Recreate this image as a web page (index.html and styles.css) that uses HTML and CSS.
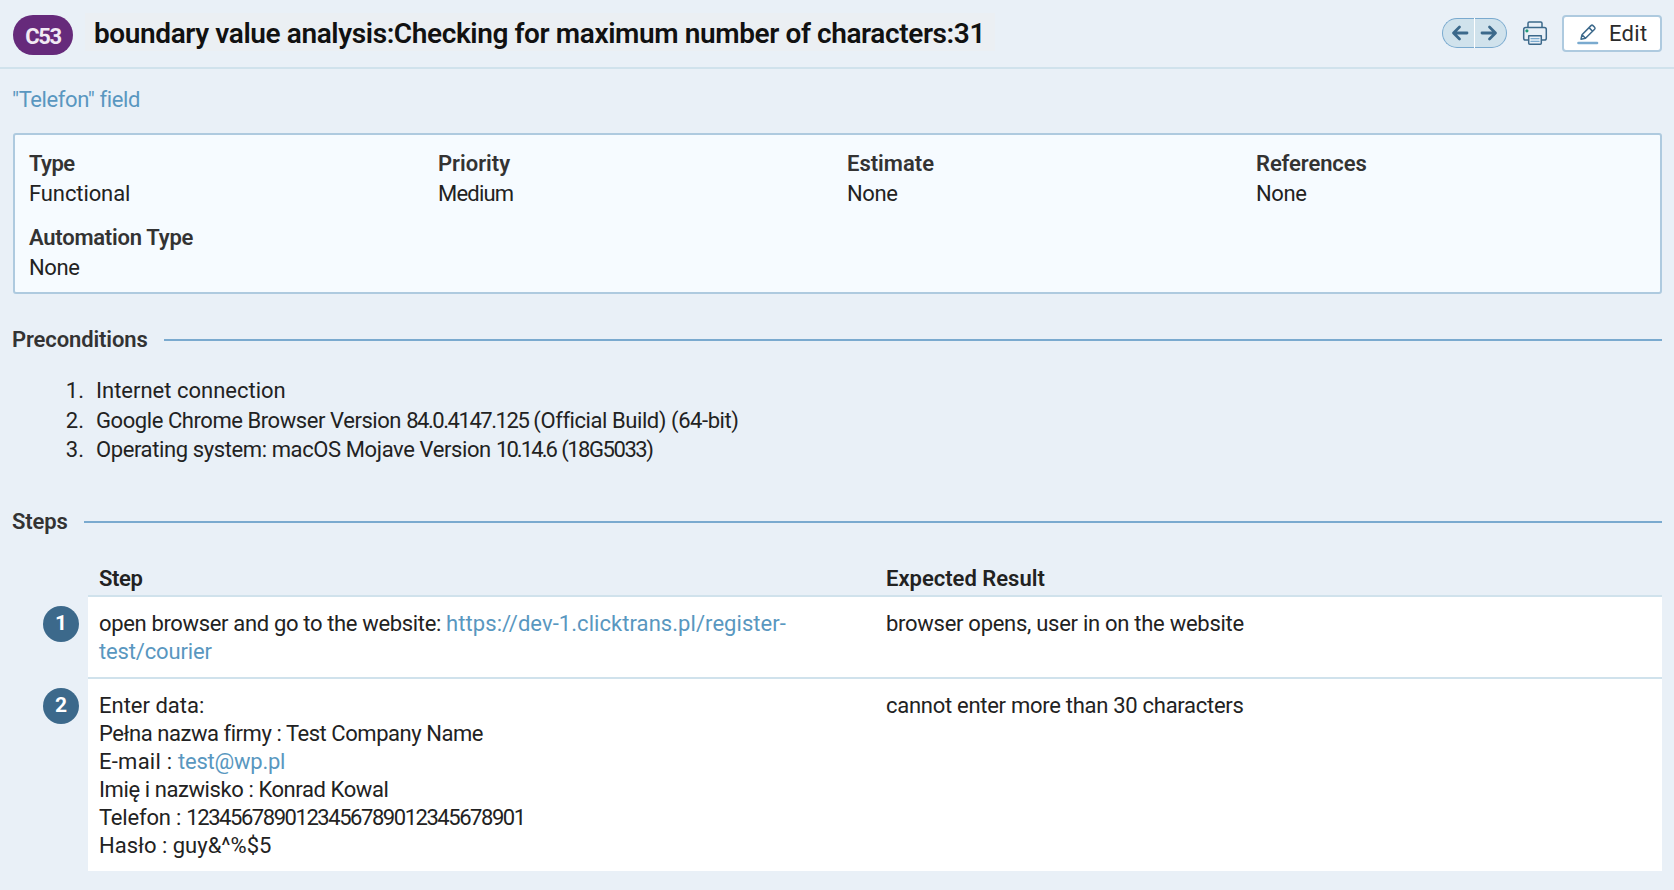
FILE: index.html
```
<!DOCTYPE html>
<html lang="en">
<head>
<meta charset="utf-8">
<title>C53 – boundary value analysis</title>
<link rel="stylesheet" href="styles.css">
</head>
<body>
<header class="header">
  <span class="case-id">C53</span>
  <h1 class="title">boundary value analysis:Checking for maximum number of characters:31</h1>
  <div class="tools">
    <div class="pager">
      <a class="pager-btn"><svg width="18" height="16" viewBox="0 0 18 16"><path d="M16 8H3M8.500 2 2.500 8l6 6"/></svg></a>
      <a class="pager-btn"><svg width="18" height="16" viewBox="0 0 18 16"><path d="M2 8h13M9.500 2l6 6-6 6"/></svg></a>
    </div>
    <svg class="printer" width="26" height="26" viewBox="0 0 26 26">
      <path class="dark" d="M6 7.500V3.300Q6 2 7.300 2H18.700Q20 2 20 3.300V7.500M6 20H3.500Q1.700 20 1.700 18.200V9.500Q1.700 7.500 3.700 7.500H22.300Q24.300 7.500 24.300 9.500V18.200Q24.300 20 22.500 20H20"/>
      <path class="paper" d="M6.700 15.800H19.300V23.200Q19.300 24.200 18.300 24.200H7.700Q6.700 24.200 6.700 23.200Z"/>
      <path class="light" d="M9 18.600h8M9 21.400h8"/>
      <circle class="led" cx="4.900" cy="10.800" r="1.600"/>
    </svg>
    <a class="edit">
      <svg width="22" height="22" viewBox="0 0 22 22">
        <path class="dark" d="M4 16.200 5 11.700 14 2.600Q15 1.700 16 2.600L17.600 4.200Q18.500 5.200 17.600 6.200L8.500 15.200ZM12 4.600l3.600 3.600M5 11.700l3.500 3.500"/>
        <path class="bar" d="M1.500 20h18.500"/>
      </svg>
      <span>Edit</span>
    </a>
  </div>
</header>
<main class="content">
  <a class="section-link">"Telefon" field</a>
  <dl class="details">
    <div><dt class="t-type">Type</dt><dd>Functional</dd></div>
    <div><dt>Priority</dt><dd class="t-medium">Medium</dd></div>
    <div><dt>Estimate</dt><dd class="t-none">None</dd></div>
    <div><dt class="t-refs">References</dt><dd class="t-none">None</dd></div>
    <div><dt class="t-auto">Automation Type</dt><dd class="t-none">None</dd></div>
  </dl>
  <h2 class="group">Preconditions</h2>
  <ol class="pre">
    <li><span class="n">1.</span><span>Internet connection</span></li>
    <li><span class="n">2.</span><span class="t-browser">Google Chrome Browser Version <span class="digits">84.0.4147.125</span> (Official Build) (64-bit)</span></li>
    <li><span class="n">3.</span><span class="t-os">Operating system: macOS Mojave Version <span class="build">10.14.6</span> <span class="digits">(18G5033)</span></span></li>
  </ol>
  <h2 class="group">Steps</h2>
  <div class="steps">
    <div class="row head"><span></span><span class="cell t-step">Step</span><span class="cell">Expected Result</span></div>
    <div class="row">
      <span class="num">1</span>
      <div class="cell t-open">open browser and go to the website: <a class="t-url">https://dev-1.clicktrans.pl/register-<br><span class="t-path">test/courier</span></a></div>
      <div class="cell t-result">browser opens, user in on the website</div>
    </div>
    <div class="row">
      <span class="num">2</span>
      <div class="cell">
        <p>Enter data:</p>
        <p class="t-name">Pełna nazwa firmy : Test Company Name</p>
        <p><span class="t-mail">E-mail : </span><a class="t-addr">test@wp.pl</a></p>
        <p class="t-person">Imię i nazwisko : Konrad Kowal</p>
        <p class="t-phone">Telefon : <span class="digits">1234567890123456789012345678901</span></p>
        <p>Hasło : guy&amp;^%$5</p>
      </div>
      <div class="cell t-result">cannot enter more than 30 characters</div>
    </div>
  </div>
</main>
</body>
</html>
```
FILE: styles.css
```
* { box-sizing: border-box; }
body {
  margin: 0;
  background: #e9f0f7;
  color: #222;
  font: 22px/28px Roboto, sans-serif;
}
h1, h2, p, dl, dd, ol { margin: 0; padding: 0; }
a { color: #5997c0; text-decoration: none; }
svg { display: block; fill: none; stroke-linecap: round; stroke-linejoin: round; }

.header {
  display: flex;
  align-items: flex-start;
  height: 69px;
  padding: 13px 12px 0 13px;
  border-bottom: 2px solid #d0e2ec;
}
.case-id {
  width: 60px;
  height: 40px;
  margin-top: 2px;
  border-radius: 20px;
  background: #662a7b;
  color: #f1eaf4;
  font-weight: 700;
  line-height: 44px;
  letter-spacing: -1.3px;
  text-align: center;
}
.title {
  height: 38px;
  margin-left: 12px;
  padding: 0 10px 0 9px;
  background: #ebeff3;
  color: #111;
  font-size: 28px;
  font-weight: 600;
  line-height: 41px;
  letter-spacing: -0.390px;
  white-space: nowrap;
}
.tools { display: flex; margin-left: auto; }
.pager { display: flex; gap: 1px; margin: 5px 15px 0 0; height: 30px; background: #fff; border-radius: 15px; }
.pager-btn {
  display: flex;
  align-items: center;
  width: 32px;
  background: #d0e2ec;
  border: 1.500px solid #7aaacf;
}
.pager-btn:first-child { border-right: 0; border-radius: 15px 0 0 15px; padding-left: 8px; }
.pager-btn:last-child { border-left: 0; border-radius: 0 15px 15px 0; padding-left: 5px; }
.pager-btn svg { stroke: #3c698b; stroke-width: 2.800; }
.printer { margin: 7px 14px 0 0; }
.dark { stroke: #3c698b; stroke-width: 1.500; }
.light { stroke: #7aaacf; stroke-width: 1.300; }
.paper { fill: #e9f0f7; stroke: #3c698b; stroke-width: 1.500; }
.led { fill: #1f9b78; }
.edit {
  display: flex;
  width: 100px;
  height: 37px;
  margin-top: 2px;
  padding-left: 13px;
  border: 2px solid #aecadf;
  border-radius: 4px;
  background: #fff;
  color: #2b2b2b;
  line-height: 34px;
  letter-spacing: 0.314px;
}
.edit svg { margin: 6px 10px 0 0; }
.edit .bar { stroke: #7aaacf; stroke-width: 2.600; }

.content { padding: 17px 12px 0 13px; }
.section-link { display: block; margin-left: -1px; letter-spacing: -0.4px; }
.details {
  display: grid;
  grid-template-columns: repeat(4, 409px);
  row-gap: 14px;
  height: 161px;
  margin-top: 19px;
  padding: 14px 0 0 14px;
  border: 2px solid #aecadf;
  border-radius: 3px;
  background: #f6fbff;
  line-height: 30px;
  align-content: start;
}
dt { font-weight: 600; color: #333; }
dd { letter-spacing: -0.1px; }
.group {
  display: flex;
  align-items: center;
  gap: 16px;
  margin-left: -1px;
  color: #333;
  font-size: 22px;
  font-weight: 600;
  letter-spacing: -0.120px;
}
.group::after { content: ""; flex: 1; height: 2px; background: #7aaacf; }
.details + .group { margin-top: 32px; }
.pre { list-style: none; margin: 22px 0 43px; line-height: 29.660px; }
.pre li { display: flex; gap: 12px; }
.n { width: 71px; text-align: right; }

.row { display: grid; grid-template-columns: 75px 787px 787px; }
.cell { padding: 13px 12px 11px 11px; background: #fff; }
.row:not(.head) .cell { border-top: 2px solid #d0e2ec; }
.head { margin-top: 14px; height: 45px; font-weight: 600; }
.head .cell { background: none; padding: 15px 12px 0 11px; }
.num {
  width: 36px;
  height: 36px;
  margin: 11px 0 0 30px;
  border-radius: 50%;
  background: #3c698b;
  color: #fff;
  font-size: 21px;
  font-weight: 700;
  line-height: 35px;
  text-align: center;
}

/* tracking */
.t-type { letter-spacing: -0.6px; }
.t-medium { letter-spacing: -0.8px; }
.t-none { letter-spacing: -0.4px; }
.t-refs { letter-spacing: -0.1px; }
.t-auto { letter-spacing: -0.25px; }
.t-browser { letter-spacing: -0.430px; }
.t-os { letter-spacing: -0.390px; }
.digits { letter-spacing: -1.450px; }
.build { letter-spacing: -1.900px; }
.t-step { letter-spacing: -0.4px; }
.t-open { letter-spacing: -0.343px; }
.t-url { letter-spacing: 0.06px; }
.t-path { letter-spacing: -0.150px; }
.t-name { letter-spacing: -0.450px; }
.t-mail { letter-spacing: 0.25px; }
.t-addr { letter-spacing: -0.246px; }
.t-person { letter-spacing: -0.410px; }
.t-phone { letter-spacing: -0.2px; }
.t-result { letter-spacing: -0.280px; }
```
